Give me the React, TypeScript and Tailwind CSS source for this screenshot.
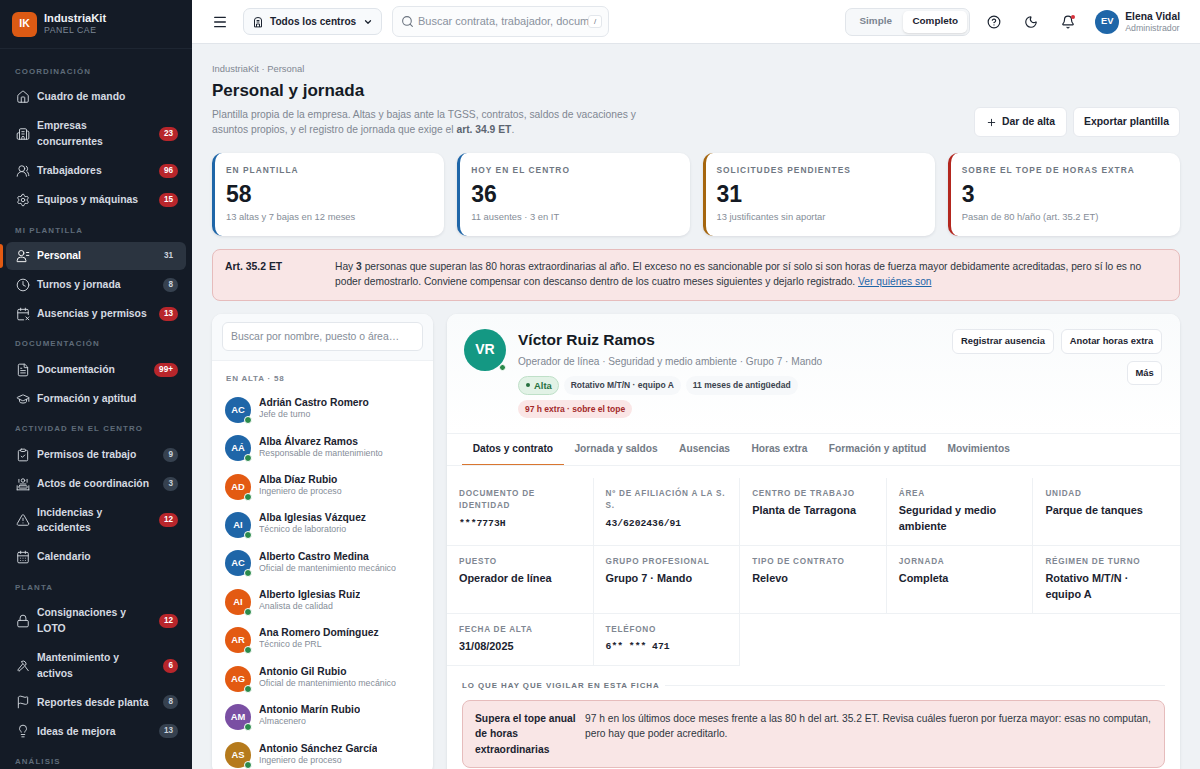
import {
  Bell,
  Building2,
  CalendarDays,
  CalendarX2,
  ChevronDown,
  CircleHelp,
  ClipboardCheck,
  Clock,
  FileText,
  Flag,
  GraduationCap,
  House,
  Lightbulb,
  Lock,
  Menu,
  Moon,
  Plus,
  Search,
  Settings,
  TriangleAlert,
  UsersRound,
} from "lucide-react";
import type { ReactNode } from "react";

const cls = "w-[14px] h-[14px] shrink-0";

function PersonalIcon() {
  return (
    <svg viewBox="0 0 24 24" className={cls} fill="none" stroke="currentColor" strokeWidth="2" strokeLinecap="round">
      <circle cx="9" cy="7" r="4.5" />
      <path d="M2 21v-1a6 6 0 0 1 6-6h3a6 6 0 0 1 6 6v1Z" />
      <path d="M18 6h4M18 11h4" />
    </svg>
  );
}

function ActosIcon() {
  return (
    <svg viewBox="0 0 24 24" className={cls} fill="none" stroke="currentColor" strokeWidth="2" strokeLinecap="round">
      <circle cx="12" cy="6" r="3" />
      <path d="M5 4v5M19 4v5M7 12h10" />
      <rect x="5" y="15" width="14" height="4" rx="1" />
      <path d="M2 22h20M2 15v7M22 15v7" />
    </svg>
  );
}

function WrenchIcon() {
  return (
    <svg viewBox="0 0 24 24" className={cls} fill="none" stroke="currentColor" strokeWidth="2" strokeLinecap="round" strokeLinejoin="round">
      <path d="M10 4a5 5 0 0 1 7 6l-2 1-5-5Z" />
      <path d="M11 9 3 19l2 2 9-8" />
      <path d="m15 12 6 8" />
    </svg>
  );
}

function CentroIcon() {
  return (
    <svg viewBox="0 0 24 24" className="w-[12px] h-[12px] shrink-0" fill="none" stroke="currentColor" strokeWidth="2" strokeLinecap="round" strokeLinejoin="round">
      <path d="M5 21V8a7 5 0 0 1 14 0v13Z" />
      <path d="M9 21v-5h6v5" />
      <path d="M10 9h4M10 12h4" />
    </svg>
  );
}

type NavItem = { label: string; icon: ReactNode; badge?: string; red?: boolean; active?: boolean; narrow?: boolean };

const navGroups: { title: string; items: NavItem[] }[] = [
  {
    title: "COORDINACIÓN",
    items: [
      { label: "Cuadro de mando", icon: <House className={cls} /> },
      { label: "Empresas concurrentes", icon: <Building2 className={cls} />, badge: "23", red: true, narrow: true },
      { label: "Trabajadores", icon: <UsersRound className={cls} />, badge: "96", red: true },
      { label: "Equipos y máquinas", icon: <Settings className={cls} />, badge: "15", red: true },
    ],
  },
  {
    title: "MI PLANTILLA",
    items: [
      { label: "Personal", icon: <PersonalIcon />, badge: "31", active: true },
      { label: "Turnos y jornada", icon: <Clock className={cls} />, badge: "8" },
      { label: "Ausencias y permisos", icon: <CalendarX2 className={cls} />, badge: "13", red: true },
    ],
  },
  {
    title: "DOCUMENTACIÓN",
    items: [
      { label: "Documentación", icon: <FileText className={cls} />, badge: "99+", red: true },
      { label: "Formación y aptitud", icon: <GraduationCap className={cls} /> },
    ],
  },
  {
    title: "ACTIVIDAD EN EL CENTRO",
    items: [
      { label: "Permisos de trabajo", icon: <ClipboardCheck className={cls} />, badge: "9" },
      { label: "Actos de coordinación", icon: <ActosIcon />, badge: "3" },
      { label: "Incidencias y accidentes", icon: <TriangleAlert className={cls} />, badge: "12", red: true, narrow: true },
      { label: "Calendario", icon: <CalendarDays className={cls} /> },
    ],
  },
  {
    title: "PLANTA",
    items: [
      { label: "Consignaciones y LOTO", icon: <Lock className={cls} />, badge: "12", red: true, narrow: true },
      { label: "Mantenimiento y activos", icon: <WrenchIcon />, badge: "6", red: true, narrow: true },
      { label: "Reportes desde planta", icon: <Flag className={cls} />, badge: "8" },
      { label: "Ideas de mejora", icon: <Lightbulb className={cls} />, badge: "13" },
    ],
  },
  { title: "ANÁLISIS", items: [] },
];

const kpis = [
  { label: "EN PLANTILLA", value: "58", sub: "13 altas y 7 bajas en 12 meses", border: "border-l-[#1f66a8]" },
  { label: "HOY EN EL CENTRO", value: "36", sub: "11 ausentes · 3 en IT", border: "border-l-[#1f66a8]" },
  { label: "SOLICITUDES PENDIENTES", value: "31", sub: "13 justificantes sin aportar", border: "border-l-[#a5660f]" },
  { label: "SOBRE EL TOPE DE HORAS EXTRA", value: "3", sub: "Pasan de 80 h/año (art. 35.2 ET)", border: "border-l-[#b3261e]" },
];

const people = [
  { i: "AC", name: "Adrián Castro Romero", job: "Jefe de turno", c: "bg-[#1f66a8]" },
  { i: "AÁ", name: "Alba Álvarez Ramos", job: "Responsable de mantenimiento", c: "bg-[#1f66a8]" },
  { i: "AD", name: "Alba Díaz Rubio", job: "Ingeniero de proceso", c: "bg-[#e35a12]" },
  { i: "AI", name: "Alba Iglesias Vázquez", job: "Técnico de laboratorio", c: "bg-[#1f66a8]" },
  { i: "AC", name: "Alberto Castro Medina", job: "Oficial de mantenimiento mecánico", c: "bg-[#1f66a8]" },
  { i: "AI", name: "Alberto Iglesias Ruiz", job: "Analista de calidad", c: "bg-[#e35a12]" },
  { i: "AR", name: "Ana Romero Domínguez", job: "Técnico de PRL", c: "bg-[#e35a12]" },
  { i: "AG", name: "Antonio Gil Rubio", job: "Oficial de mantenimiento mecánico", c: "bg-[#e35a12]" },
  { i: "AM", name: "Antonio Marín Rubio", job: "Almacenero", c: "bg-[#7a4fa3]" },
  { i: "AS", name: "Antonio Sánchez García", job: "Ingeniero de proceso", c: "bg-[#b57a1c]" },
];

const tabs = ["Datos y contrato", "Jornada y saldos", "Ausencias", "Horas extra", "Formación y aptitud", "Movimientos"];

const fields: { label: string; value: string; mono?: boolean }[] = [
  { label: "DOCUMENTO DE IDENTIDAD", value: "***7773H", mono: true },
  { label: "Nº DE AFILIACIÓN A LA S. S.", value: "43/6202436/91", mono: true },
  { label: "CENTRO DE TRABAJO", value: "Planta de Tarragona" },
  { label: "ÁREA", value: "Seguridad y medio ambiente" },
  { label: "UNIDAD", value: "Parque de tanques" },
  { label: "PUESTO", value: "Operador de línea" },
  { label: "GRUPO PROFESIONAL", value: "Grupo 7 · Mando" },
  { label: "TIPO DE CONTRATO", value: "Relevo" },
  { label: "JORNADA", value: "Completa" },
  { label: "RÉGIMEN DE TURNO", value: "Rotativo M/T/N · equipo A" },
  { label: "FECHA DE ALTA", value: "31/08/2025" },
  { label: "TELÉFONO", value: "6** *** 471", mono: true },
];

function Sidebar() {
  return (
    <aside className="w-[192px] h-full shrink-0 overflow-hidden bg-[#141b26] text-[#d5dae1]">
      <div className="h-[49px] flex items-center gap-[7px] px-3 border-b border-[#1e2632]">
        <div className="w-[25px] h-[25px] rounded-[6px] bg-[#dc5a14] text-white text-[10.5px] font-bold flex items-center justify-center">
          IK
        </div>
        <div>
          <div className="text-[11.2px] leading-[13px] font-bold text-[#eef1f5]">IndustriaKit</div>
          <div className="text-[8.7px] leading-[11px] tracking-[0.06em] text-[#7d8896]">PANEL CAE</div>
        </div>
      </div>
      <nav className="px-[6px] pt-[16px] [&_svg]:stroke-[1.6]">
        {navGroups.map((g) => (
          <div key={g.title} className="mb-[10px]">
            <div className="px-[9px] mb-[4.4px] h-[14px] leading-[14px] text-[7.9px] font-bold tracking-[0.14em] text-[#5f6b79]">
              {g.title}
            </div>
            <div className="flex flex-col gap-[1.4px]">
              {g.items.map((it) => (
                <div
                  key={it.label}
                  className={
                    "relative flex items-center gap-[7px] pl-[10px] pr-2 py-[6px] rounded-[6px] " +
                    (it.active ? "bg-[#2b3440] text-white" : "")
                  }
                >
                  {it.active && <span className="absolute left-[-6px] top-[2px] bottom-[2px] w-[3px] rounded-r bg-[#e35a12]" />}
                  {it.icon}
                  <span className={"min-w-0 text-[10.4px] leading-[15.6px] font-bold " + (it.narrow ? "max-w-[100px]" : "")}>{it.label}</span>
                  {it.badge && (
                    <span
                      className={
                        "ml-auto shrink-0 h-[14px] min-w-[14px] px-[5px] rounded-full text-[8.2px] leading-[14px] font-bold text-center " +
                        (it.red ? "bg-[#b8262b] text-white" : it.active ? "text-[#cbd3dc]" : "bg-[#36414f] text-[#cbd3dc]")
                      }
                    >
                      {it.badge}
                    </span>
                  )}
                </div>
              ))}
            </div>
          </div>
        ))}
      </nav>
    </aside>
  );
}

function Topbar() {
  return (
    <header className="h-[44px] shrink-0 bg-white border-b border-[#e1e5ea] flex items-center pl-5 pr-5">
      <Menu className="w-[16px] h-[16px] text-[#1b2330]" />
      <button className="ml-[15px] h-[27px] w-[139px] flex items-center pl-[8px] gap-[6px] rounded-[7px] border border-[#dfe4ea] bg-[#f8fafc] text-[10.1px] font-bold text-[#1b2330]">
        <CentroIcon />
        Todos los centros
        <ChevronDown className="w-[10px] h-[10px] ml-[1px]" strokeWidth={3} />
      </button>
      <div className="ml-[10px] h-[31px] w-[217px] flex items-center pl-2 pr-[6px] rounded-[7px] border border-[#e3e7ec] bg-[#fbfcfd]">
        <Search className="w-[13px] h-[13px] mr-[4px] shrink-0 text-[#6b7480]" />
        <input
          className="flex-1 min-w-0 bg-transparent outline-none text-[11px] placeholder:text-[#8a929d]"
          placeholder="Buscar contrata, trabajador, documento…"
        />
        <span className="shrink-0 w-[14px] h-[13px] rounded-[3px] border border-[#e3e7ec] bg-white text-[8px] leading-[11px] text-center text-[#6b7480]">
          /
        </span>
      </div>
      <div className="ml-auto h-[28px] w-[125px] flex items-center p-[2px] rounded-[7px] border border-[#e1e5ea] bg-[#f6f8fa] text-[9.9px] font-bold">
        <span className="w-[55px] text-center text-[#7b8490]">Simple</span>
        <span className="flex-1 h-full flex items-center justify-center rounded-[5px] bg-white text-[#1b2330] shadow-sm">Completo</span>
      </div>
      <CircleHelp className="ml-[17px] w-[14px] h-[14px] text-[#1b2330]" />
      <Moon className="ml-[23px] w-[14px] h-[14px] text-[#1b2330]" />
      <div className="relative ml-[23px]">
        <Bell className="w-[14px] h-[14px] text-[#1b2330]" />
        <span className="absolute right-0 top-0 w-[4px] h-[4px] rounded-full bg-[#d6303a]" />
      </div>
      <div className="ml-[20px] w-[24px] h-[24px] rounded-full bg-[#1f66a8] text-white text-[9.4px] font-bold flex items-center justify-center">
        EV
      </div>
      <div className="ml-[6px]">
        <div className="text-[10.3px] leading-[13px] font-bold text-[#1b2330]">Elena Vidal</div>
        <div className="text-[8.8px] leading-[11px] text-[#858d98]">Administrador</div>
      </div>
    </header>
  );
}

function Person({ p }: { p: (typeof people)[number] }) {
  return (
    <div className="h-[38.4px] flex items-center gap-[8px] px-[13px]">
      <div className={"relative shrink-0 w-[26px] h-[26px] rounded-full text-white text-[9.4px] font-bold flex items-center justify-center " + p.c}>
        {p.i}
        <span className="absolute right-[-1px] bottom-[-1px] w-[8px] h-[8px] rounded-full bg-[#2b8a4b] border-[1.5px] border-white" />
      </div>
      <div className="min-w-0 -mt-[3px]">
        <div className="text-[10.3px] leading-[13px] font-bold text-[#1b2330] truncate">{p.name}</div>
        <div className="text-[8.8px] leading-[11.5px] text-[#858d98] truncate">{p.job}</div>
      </div>
    </div>
  );
}

function Field({ f, i }: { f: (typeof fields)[number]; i: number }) {
  const last = i === 4 || i === 9;
  const h = i >= 10 ? "h-[52px]" : "h-[68px]";
  return (
    <div className={"pl-3 pr-[14px] pt-[10px] border-b border-[#eef1f4] " + h + (last ? "" : " border-r")}>
      <div className="text-[8.2px] leading-[12.5px] font-bold tracking-[0.09em] text-[#7f8792]">{f.label}</div>
      <div
        className={
          "mt-[3px] text-[#1b2330] font-bold " +
          (f.mono ? "font-['Liberation_Mono',monospace] text-[9.7px] leading-[15.5px]" : "text-[10.9px] leading-[15.6px]")
        }
      >
        {f.value}
      </div>
    </div>
  );
}

export default function App() {
  return (
    <div className="flex h-[769px] w-[1200px] overflow-hidden bg-[#eff2f5] font-['Liberation_Sans',Arial,sans-serif] text-[#1b2330]">
      <Sidebar />
      <div className="flex-1 min-w-0 h-full flex flex-col">
        <Topbar />
        <main className="flex-1 min-h-0 overflow-hidden px-5 pt-[18px]">
          <div className="flex justify-between items-start">
            <div>
              <div className="text-[9.4px] leading-[13px] text-[#7f8792]">IndustriaKit · Personal</div>
              <h1 className="mt-[5px] text-[17px] leading-[22px] font-bold text-[#141a24]">Personal y jornada</h1>
              <p className="mt-[4.5px] w-[440px] text-[10.3px] leading-[15.6px] text-[#7f8792]">
                Plantilla propia de la empresa. Altas y bajas ante la TGSS, contratos, saldos de vacaciones y asuntos propios, y el registro de jornada que exige el <b className="text-[#5c6570]">art. 34.9 ET</b>.
              </p>
            </div>
            <div className="flex gap-[6px] mt-[45px]">
              <button className="h-[30px] w-[93px] flex items-center justify-center gap-[5px] rounded-[6px] bg-white border border-[#e6e9ee] text-[10.4px] font-bold text-[#1b2330]">
                <Plus className="w-[11px] h-[11px]" />
                Dar de alta
              </button>
              <button className="h-[30px] w-[107px] rounded-[6px] bg-white border border-[#e6e9ee] text-[10.4px] font-bold text-[#1b2330]">
                Exportar plantilla
              </button>
            </div>
          </div>

          <div className="mt-[15px] grid grid-cols-4 gap-[13px]">
            {kpis.map((k) => (
              <div key={k.label} className={"h-[83px] rounded-[10px] bg-white border-l-[3px] pl-[11px] pt-[11px] shadow-[0_1px_3px_rgba(20,30,45,0.1)] " + k.border}>
                <div className="text-[8.4px] leading-[12px] font-bold tracking-[0.12em] text-[#6f7782]">{k.label}</div>
                <div className="mt-[5px] text-[23px] leading-[27px] font-bold text-[#141a24]">{k.value}</div>
                <div className="mt-[2px] text-[9.4px] leading-[13px] text-[#858d98]">{k.sub}</div>
              </div>
            ))}
          </div>

          <div className="mt-[13px] flex rounded-[8px] border border-[#e6bcbc] bg-[#f9e6e6] pl-3 pr-5 pt-[9px] h-[52px]">
            <div className="w-[110px] shrink-0 text-[10.4px] leading-[15.6px] font-bold text-[#1b2330]">Art. 35.2 ET</div>
            <p className="text-[10.25px] leading-[15.6px] text-[#2e3641]">
              Hay <b>3</b> personas que superan las 80 horas extraordinarias al año. El exceso no es sancionable por sí solo si son horas de fuerza mayor debidamente acreditadas, pero sí lo es no poder demostrarlo. Conviene compensar con descanso dentro de los cuatro meses siguientes y dejarlo registrado. <span className="underline text-[#1f66a8]">Ver quiénes son</span>
            </p>
          </div>

          <div className="mt-[13px] flex gap-[14px] items-start">
            <section className="w-[221px] shrink-0 rounded-[10px] bg-white shadow-[0_1px_3px_rgba(20,30,45,0.1)] overflow-hidden">
              <div className="h-[47px] flex items-center px-[10px] bg-[#f8fafc] border-b border-[#eef1f4]">
                <input
                  className="w-full h-[29px] rounded-[6px] border border-[#e3e7ec] bg-white px-2 text-[10.4px] outline-none placeholder:text-[#858d98]"
                  placeholder="Buscar por nombre, puesto o área…"
                />
              </div>
              <div className="pl-[14px] pt-[11px] pb-[5px] h-[14px] box-content text-[8px] leading-[14px] font-bold tracking-[0.1em] text-[#7f8792]">EN ALTA · 58</div>
              {people.map((p) => (
                <Person key={p.name} p={p} />
              ))}
            </section>

            <section className="flex-1 min-w-0 rounded-[10px] bg-white shadow-[0_1px_3px_rgba(20,30,45,0.1)] overflow-hidden">
              <div className="h-[120px] flex pl-[17px] pr-[18px] pt-[15px] bg-gradient-to-b from-[#f9fbfc] to-white border-b border-[#eef1f4]">
                <div className="relative shrink-0 w-[42px] h-[42px] rounded-full bg-[#149883] text-white text-[14px] font-bold flex items-center justify-center">
                  VR
                  <span className="absolute right-0 bottom-0 w-[7px] h-[7px] rounded-full bg-[#2b8a4b] border border-white" />
                </div>
                <div className="ml-[12px] flex-1 min-w-0">
                  <h2 className="text-[15.5px] leading-[22px] font-bold text-[#141a24]">Víctor Ruiz Ramos</h2>
                  <div className="mt-[3.5px] text-[10.1px] leading-[15px] text-[#7f8792]">Operador de línea · Seguridad y medio ambiente · Grupo 7 · Mando</div>
                  <div className="mt-[6.5px] flex flex-wrap gap-x-[5px] gap-y-[5px] w-[290px] text-[8.5px] font-bold leading-[19px]">
                    <span className="h-[19px] flex items-center gap-[3px] px-[6px] rounded-full bg-[#e2f2e6] border border-[#bfe0c8] text-[#26703f] text-[9.4px]">
                      <span className="w-[4px] h-[4px] mx-[1px] rounded-full bg-[#26703f]" />
                      Alta
                    </span>
                    <span className="h-[19px] px-[7px] rounded-full bg-[#f6f8fa] text-[#3b434e]">Rotativo M/T/N · equipo A</span>
                    <span className="h-[19px] px-[7px] rounded-full bg-[#f6f8fa] text-[#3b434e]">11 meses de antigüedad</span>
                    <span className="h-[18px] leading-[18px] px-[7px] rounded-full bg-[#fae6e6] text-[#a32a2a]">97 h extra · sobre el tope</span>
                  </div>
                </div>
                <div className="w-[212px] shrink-0 flex flex-wrap justify-end gap-x-[7px] gap-y-[7px] content-start">
                  <button className="h-[25px] w-[102px] rounded-[6px] bg-white border border-[#e6e9ee] text-[9.4px] font-bold">Registrar ausencia</button>
                  <button className="h-[25px] w-[101px] rounded-[6px] bg-white border border-[#e6e9ee] text-[9.4px] font-bold">Anotar horas extra</button>
                  <button className="h-[24px] w-[35px] rounded-[6px] bg-white border border-[#e6e9ee] text-[9.4px] font-bold">Más</button>
                </div>
              </div>

              <div className="h-[32px] flex px-[15px] border-b border-[#eef1f4] text-[10.2px] font-bold text-[#737b86]">
                {tabs.map((t, i) => (
                  <div
                    key={t}
                    className={"h-full flex items-center px-[10.7px] border-b-[1.5px] " + (i === 0 ? "text-[#1b2330] border-[#d9762f]" : "border-transparent")}
                  >
                    {t}
                  </div>
                ))}
              </div>

              <div className="mt-[12px] grid grid-cols-5">
                {fields.map((f, i) => (
                  <Field key={f.label} f={f} i={i} />
                ))}
              </div>

              <div className="mt-[14px] px-[15px] flex items-center gap-[5px]">
                <span className="text-[7.9px] leading-[12px] font-bold tracking-[0.12em] text-[#6f7782]">LO QUE HAY QUE VIGILAR EN ESTA FICHA</span>
                <span className="flex-1 h-px bg-[#eef1f4]" />
              </div>
              <div className="mx-[15px] mt-[8px] mb-[16px] flex rounded-[8px] border border-[#e6bcbc] bg-[#f9e6e6] px-3 pt-[10px] pb-[10px]">
                <div className="w-[110px] shrink-0 text-[10.3px] leading-[15.6px] font-bold text-[#1b2330]">Supera el tope anual de horas extraordinarias</div>
                <p className="text-[10.25px] leading-[15.6px] text-[#2e3641]">
                  97 h en los últimos doce meses frente a las 80 h del art. 35.2 ET. Revisa cuáles fueron por fuerza mayor: esas no computan, pero hay que poder acreditarlo.
                </p>
              </div>
            </section>
          </div>
        </main>
      </div>
    </div>
  );
}
